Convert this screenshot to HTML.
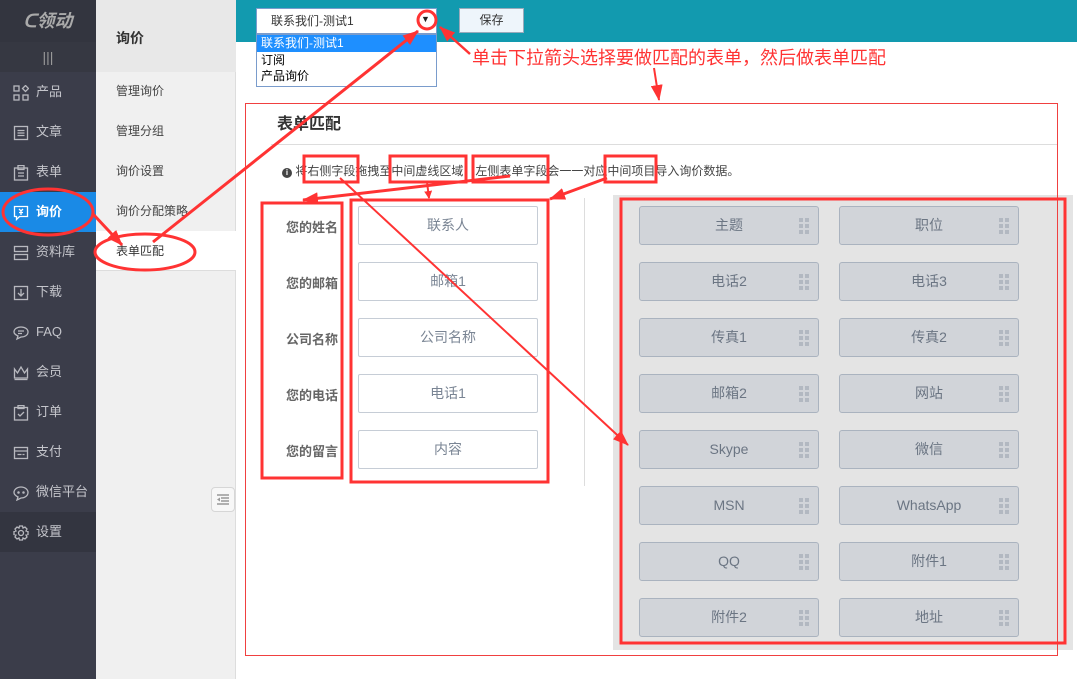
<!DOCTYPE html>
<html><head><meta charset="utf-8">
<style>
*{margin:0;padding:0;box-sizing:border-box}
body{width:1077px;height:679px;overflow:hidden;background:#fff;font-family:"Liberation Sans","Noto Sans CJK SC",sans-serif;position:relative}
.abs{position:absolute}
#side{left:0;top:0;width:96px;height:679px;background:#3b3d4a}
#logo{left:0;top:0;width:96px;height:42px;background:#33353f;color:#aaa;font-style:italic;font-weight:bold;font-size:18px;text-align:center;line-height:42px}
#bars{left:0;top:42px;width:96px;height:30px;background:#363842;color:#999;text-align:center;line-height:30px;font-size:14px}
.mi{position:absolute;left:0;width:96px;height:40px;color:#c4c5cb;font-size:13px;line-height:40px;padding-left:36px}
.mi svg{position:absolute;left:13px;top:13px}
.mi.act{background:#1a8ae6;color:#fff;font-weight:bold}
#sub{left:96px;top:0;width:140px;height:679px;background:#f0f0f0;border-right:1px solid #ddd}
#subh{left:96px;top:0;width:140px;height:72px;background:#e8e8e8;font-weight:bold;font-size:14px;color:#333;padding:28px 0 0 20px}
.si{position:absolute;left:96px;width:140px;height:40px;line-height:40px;padding-left:20px;font-size:12px;color:#444}
#top{left:236px;top:0;width:841px;height:42px;background:#129aaf}
.btn{position:absolute;background:#eef5fb;border:1px solid #9ab;font-size:12px;text-align:center;line-height:23px;color:#333}
.inp{position:absolute;width:180px;height:39px;border:1px solid #c6cdd6;border-radius:2px;background:#fff;color:#7a8594;font-size:14px;text-align:center;line-height:37px}
.lab{position:absolute;left:268px;width:70px;text-align:right;font-weight:bold;color:#666;font-size:13px}
.fb{position:absolute;width:180px;height:39px;border:1px solid #aab3bf;border-radius:3px;background:#d1d4d9;color:#6b7583;font-size:14px;text-align:center;line-height:37px}
.fb i{position:absolute;right:9px;top:11px;width:10px;height:16px;background:
radial-gradient(#b2b8c1 0 0) 0 0/4px 4px,radial-gradient(#b2b8c1 0 0) 6px 0/4px 4px,radial-gradient(#b2b8c1 0 0) 0 6px/4px 4px,radial-gradient(#b2b8c1 0 0) 6px 6px/4px 4px,radial-gradient(#b2b8c1 0 0) 0 12px/4px 4px,radial-gradient(#b2b8c1 0 0) 6px 12px/4px 4px;background-repeat:no-repeat}
</style></head><body>
<div id="side" class="abs"></div>
<div id="logo" class="abs">ᑕ领动</div>
<div id="bars" class="abs">|||</div>
<div class="mi" style="top:72px"><svg width="16" height="16" fill="none" stroke="#b8b9bf" stroke-width="1.3"><rect x="1" y="1" width="5" height="5"/><rect x="1" y="10" width="5" height="5"/><rect x="10" y="10" width="5" height="5"/><path d="M12.5 0.5l3 3-3 3-3-3z"/></svg>产品</div>
<div class="mi" style="top:112px"><svg width="16" height="16" fill="none" stroke="#b8b9bf" stroke-width="1.3"><rect x="1.5" y="1.5" width="13" height="13"/><path d="M4.5 5.5h7M4.5 8h7M4.5 10.5h7"/></svg>文章</div>
<div class="mi" style="top:152px"><svg width="16" height="16" fill="none" stroke="#b8b9bf" stroke-width="1.3"><rect x="1.5" y="3" width="13" height="12"/><rect x="5" y="0.5" width="6" height="4"/><path d="M5 8h6M5 11h6"/></svg>表单</div>
<div class="mi act" style="top:192px"><svg width="16" height="16" fill="none" stroke="#fff" stroke-width="1.3"><path d="M1.5 1.5h13v10h-8l-3 3v-3h-2z"/><path d="M6 4l2 2 2-2M8 6v4M6 7.5h4"/></svg>询价</div>
<div class="mi" style="top:232px"><svg width="16" height="16" fill="none" stroke="#b8b9bf" stroke-width="1.3"><rect x="1.5" y="1.5" width="13" height="5"/><rect x="1.5" y="9.5" width="13" height="5"/></svg>资料库</div>
<div class="mi" style="top:272px"><svg width="16" height="16" fill="none" stroke="#b8b9bf" stroke-width="1.3"><rect x="1.5" y="1.5" width="13" height="13"/><path d="M8 4v7M5 8l3 3 3-3"/></svg>下载</div>
<div class="mi" style="top:312px"><svg width="16" height="16" fill="none" stroke="#b8b9bf" stroke-width="1.3"><path d="M8 2c4 0 7 2 7 5s-3 5-7 5l-4 2 1-3c-2-1-4-2-4-4 0-3 3-5 7-5z"/><path d="M5 6h6M5 8.5h4"/></svg>FAQ</div>
<div class="mi" style="top:352px"><svg width="16" height="16" fill="none" stroke="#b8b9bf" stroke-width="1.3"><path d="M1.5 4l3 4 3.5-6 3.5 6 3-4v9h-13z"/><path d="M1.5 14.5h13"/></svg>会员</div>
<div class="mi" style="top:392px"><svg width="16" height="16" fill="none" stroke="#b8b9bf" stroke-width="1.3"><rect x="1.5" y="2.5" width="13" height="12.5"/><rect x="5" y="0.5" width="6" height="3"/><path d="M5 9l2 2 4-4"/></svg>订单</div>
<div class="mi" style="top:432px"><svg width="16" height="16" fill="none" stroke="#b8b9bf" stroke-width="1.3"><rect x="1.5" y="2.5" width="13" height="11"/><path d="M1.5 6h13M4.5 9.5h4M9.5 9.5h2"/></svg>支付</div>
<div class="mi" style="top:472px"><svg width="16" height="16" fill="none" stroke="#b8b9bf" stroke-width="1.3"><path d="M8 2c4 0 7 2.5 7 5.5S12 13 8 13l-4 2 1-3c-2-1-4-2.5-4-4.5C1 4.5 4 2 8 2z"/><circle cx="5.5" cy="7.5" r=".6"/><circle cx="10.5" cy="7.5" r=".6"/></svg>微信平台</div>
<div class="mi" style="top:512px;background:#333540"><svg width="16" height="16" fill="none" stroke="#b8b9bf" stroke-width="1.3"><path d="M6.5 1h3l.5 2 2-1 2 2-1 2 2 .5v3l-2 .5 1 2-2 2-2-1-.5 2h-3l-.5-2-2 1-2-2 1-2-2-.5v-3l2-.5-1-2 2-2 2 1z"/><circle cx="8" cy="8" r="2.5"/></svg>设置</div>

<div id="sub" class="abs"></div>
<div id="subh" class="abs">询价</div>
<div class="si" style="top:71px">管理询价</div>
<div class="si" style="top:111px">管理分组</div>
<div class="si" style="top:151px">询价设置</div>
<div class="si" style="top:191px">询价分配策略</div>
<div class="si" style="top:231px;background:#fff;width:140px;color:#333">表单匹配</div>
<div class="abs" style="left:96px;top:270px;width:140px;border-top:1px solid #ddd"></div>
<div class="abs" style="left:211px;top:487px;width:24px;height:25px;border:1px solid #d6d6d6;border-radius:4px;background:#f7f7f7"><svg width="22" height="23"><path d="M5 7h12M9 10h8M9 13h8M5 16h12" stroke="#999" stroke-width="1.5"/><path d="M8 9.5l-3 2 3 2z" fill="#999"/></svg></div>

<div id="top" class="abs"></div>
<div class="abs" style="left:256px;top:8px;width:181px;height:26px;background:#fff;border:1px solid #7a9ccc;font-size:12px;line-height:24px;padding-left:14px;color:#333">联系我们-测试1</div>
<div class="abs" style="left:421px;top:14px;font-size:9px;color:#222">▼</div>
<div class="abs" style="left:256px;top:34px;width:181px;height:53px;background:#fff;border:1px solid #7a9ccc;font-size:12px;line-height:16px">
<div style="background:#1e8fff;color:#fff;padding-left:4px;height:17px">联系我们-测试1</div>
<div style="padding-left:4px">订阅</div><div style="padding-left:4px">产品询价</div></div>
<div class="btn" style="left:459px;top:8px;width:65px;height:25px">保存</div>

<div class="abs" style="left:472px;top:44px;color:#f33;font-size:18px;white-space:nowrap">单击下拉箭头选择要做匹配的表单，然后做表单匹配</div>

<div class="abs" style="left:277px;top:110px;font-size:16px;font-weight:bold;color:#333">表单匹配</div>
<div class="abs" style="left:271px;top:144px;width:786px;border-top:1px solid #ddd"></div>
<div class="abs" style="left:282px;top:162px;font-size:12px;color:#444;white-space:nowrap"><span style="display:inline-block;width:10px;height:10px;border-radius:50%;background:#444;color:#fff;font-size:8px;text-align:center;line-height:10px;font-weight:bold;vertical-align:0">i</span> 将右侧字段拖拽至中间虚线区域，左侧表单字段会一一对应中间项目导入询价数据。</div>

<div class="lab" style="top:217px">您的姓名</div>
<div class="lab" style="top:273px">您的邮箱</div>
<div class="lab" style="top:329px">公司名称</div>
<div class="lab" style="top:385px">您的电话</div>
<div class="lab" style="top:441px">您的留言</div>
<div class="inp" style="left:358px;top:206px">联系人</div>
<div class="inp" style="left:358px;top:262px">邮箱1</div>
<div class="inp" style="left:358px;top:318px">公司名称</div>
<div class="inp" style="left:358px;top:374px">电话1</div>
<div class="inp" style="left:358px;top:430px">内容</div>
<div class="abs" style="left:584px;top:198px;height:288px;border-left:1px solid #ddd"></div>

<div class="abs" style="left:613px;top:195px;width:460px;height:455px;background:#e4e4e4"></div>
<div class="fb" style="left:639px;top:206px">主题<i></i></div><div class="fb" style="left:839px;top:206px">职位<i></i></div>
<div class="fb" style="left:639px;top:262px">电话2<i></i></div><div class="fb" style="left:839px;top:262px">电话3<i></i></div>
<div class="fb" style="left:639px;top:318px">传真1<i></i></div><div class="fb" style="left:839px;top:318px">传真2<i></i></div>
<div class="fb" style="left:639px;top:374px">邮箱2<i></i></div><div class="fb" style="left:839px;top:374px">网站<i></i></div>
<div class="fb" style="left:639px;top:430px">Skype<i></i></div><div class="fb" style="left:839px;top:430px">微信<i></i></div>
<div class="fb" style="left:639px;top:486px">MSN<i></i></div><div class="fb" style="left:839px;top:486px">WhatsApp<i></i></div>
<div class="fb" style="left:639px;top:542px">QQ<i></i></div><div class="fb" style="left:839px;top:542px">附件1<i></i></div>
<div class="fb" style="left:639px;top:598px">附件2<i></i></div><div class="fb" style="left:839px;top:598px">地址<i></i></div>

<svg class="abs" style="left:0;top:0" width="1077" height="679">
<defs><marker id="ah" markerWidth="8" markerHeight="8" refX="7" refY="4" orient="auto" markerUnits="userSpaceOnUse"><path d="M0 0L8 4 0 8z" fill="#f33"/></marker>
<marker id="ab" markerWidth="16" markerHeight="12" refX="15" refY="6" orient="auto" markerUnits="userSpaceOnUse"><path d="M0 0L16 6 0 12z" fill="#f33"/></marker></defs>
<g fill="none" stroke="#f33">
<rect x="245.5" y="103.5" width="812" height="552" stroke="#f04040" stroke-width="1"/>
<rect x="621" y="199" width="444" height="444" stroke-width="3"/>
<rect x="262" y="203" width="80" height="275" stroke-width="3"/>
<rect x="351" y="200" width="197" height="282" stroke-width="3"/>
<rect x="304" y="156" width="54" height="26" stroke-width="3"/>
<rect x="390" y="156" width="76" height="26" stroke-width="3"/>
<rect x="473" y="156" width="75" height="26" stroke-width="3"/>
<rect x="605" y="156" width="51" height="26" stroke-width="3"/>
<circle cx="427" cy="20" r="9" stroke-width="3"/>
<ellipse cx="48" cy="212" rx="45" ry="23" stroke-width="3"/>
<ellipse cx="145" cy="252" rx="50" ry="18" stroke-width="3"/>
<line x1="153" y1="242" x2="418" y2="31" stroke-width="3" marker-end="url(#ab)"/>
<line x1="93" y1="214" x2="122" y2="245" stroke-width="3" marker-end="url(#ab)"/>
<line x1="470" y1="54" x2="440" y2="27" stroke-width="2.5" marker-end="url(#ab)"/>
<line x1="654" y1="68" x2="659" y2="100" stroke-width="2" marker-end="url(#ab)"/>
<line x1="340" y1="178" x2="628" y2="445" stroke-width="2" marker-end="url(#ab)"/>
<line x1="427" y1="182" x2="429" y2="198" stroke-width="2" marker-end="url(#ah)"/>
<line x1="510" y1="176" x2="303" y2="200" stroke-width="3" marker-end="url(#ab)"/>
<line x1="607" y1="178" x2="550" y2="199" stroke-width="3" marker-end="url(#ab)"/>
</g></svg>
</body></html>
